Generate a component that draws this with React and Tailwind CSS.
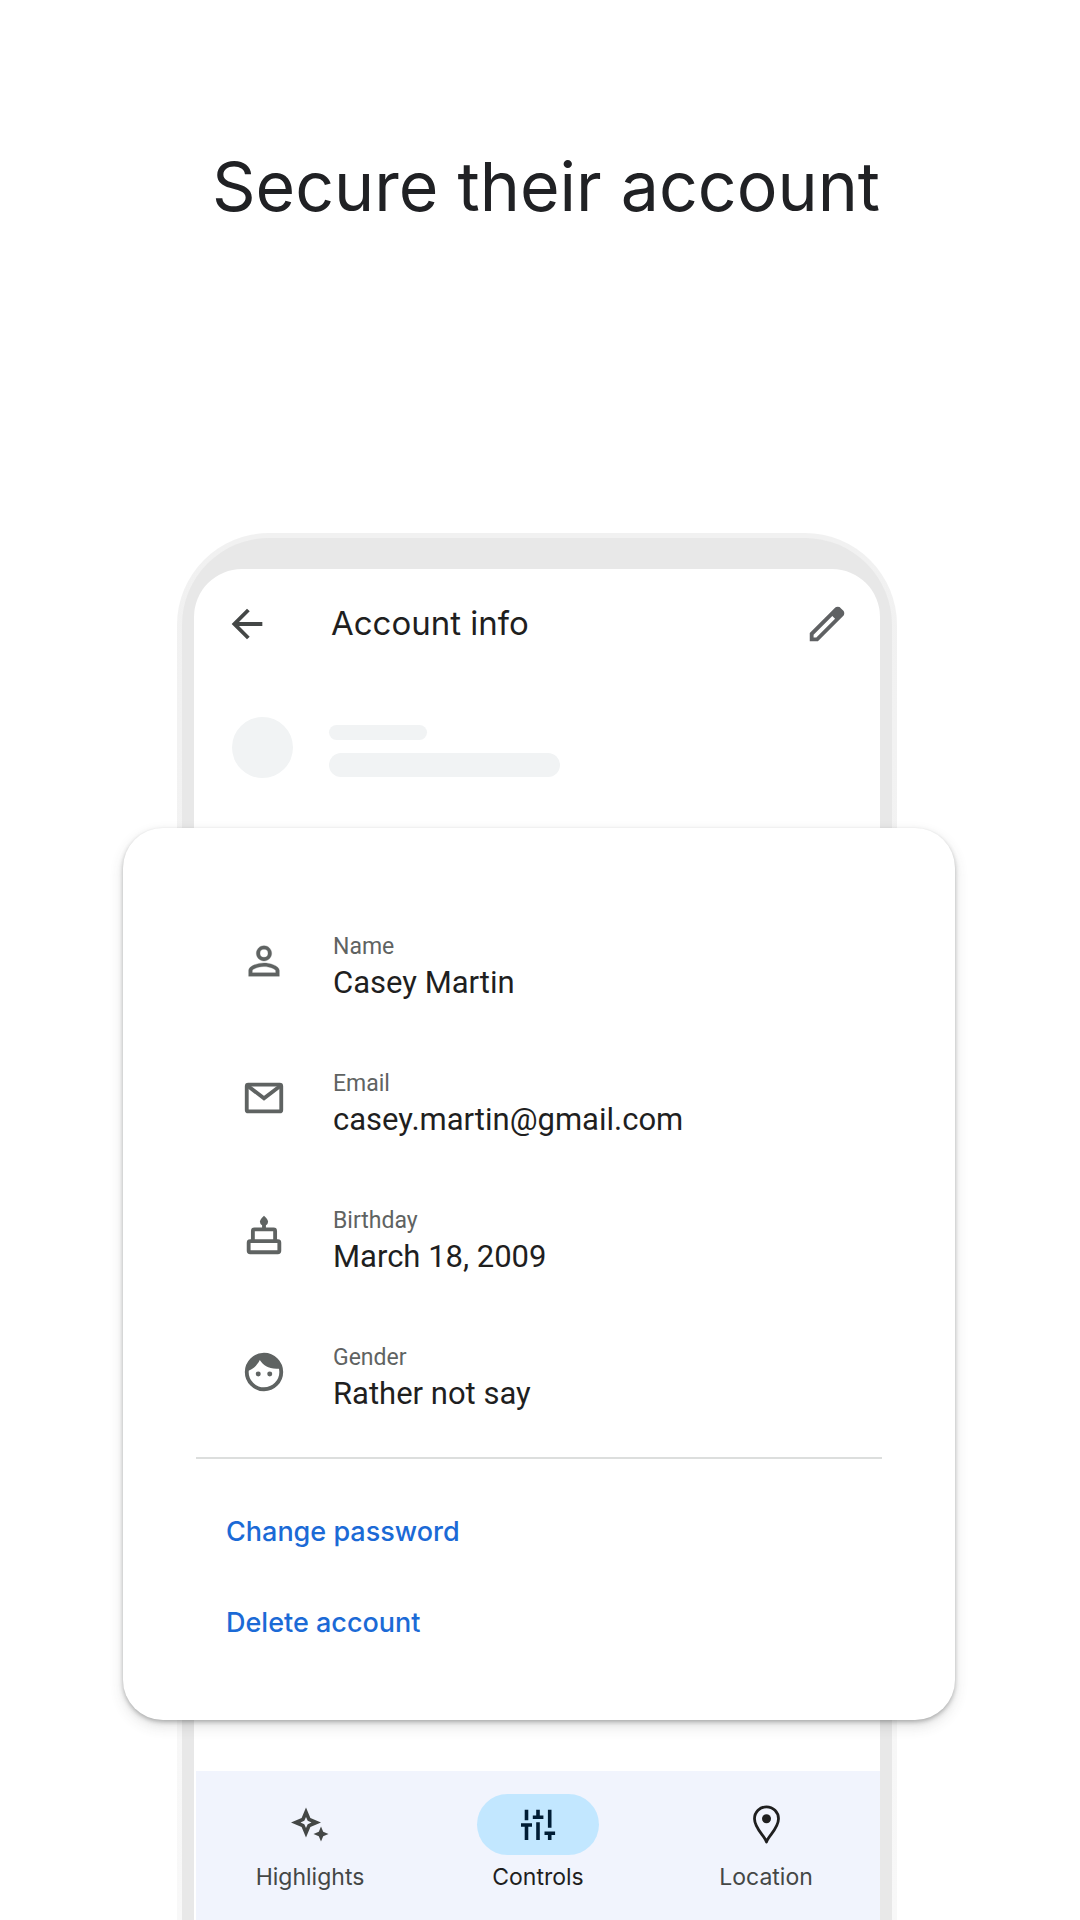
import { MdArrowBack } from 'react-icons/md';
import clsx from 'clsx';

const PersonIcon = () => (
    <svg viewBox="0 0 24 24" className="size-[46px]" fill="currentColor" stroke="currentColor" strokeWidth="0.15" aria-hidden="true">
        <path d="M12 5.9a2.1 2.1 0 1 1 0 4.2 2.1 2.1 0 0 1 0-4.2m0 9c2.97 0 6.1 1.46 6.1 2.1v1.1H5.9V17c0-.64 3.13-2.1 6.1-2.1M12 4C9.79 4 8 5.79 8 8s1.79 4 4 4 4-1.79 4-4-1.79-4-4-4zm0 9c-2.67 0-8 1.34-8 4v3h16v-3c0-2.66-5.33-4-8-4z" />
    </svg>
);

const MailIcon = () => (
    <svg viewBox="0 0 24 24" className="size-[46px]" fill="none" stroke="currentColor" strokeWidth="2" aria-hidden="true">
        <rect x="3" y="5" width="18" height="14" rx="0.8" />
        <path d="M3.4 5.6 12 12.2l8.6-6.6" />
    </svg>
);

const CakeIcon = () => (
    <svg viewBox="0 0 24 24" className="size-[46px]" fill="none" stroke="currentColor" strokeWidth="2" aria-hidden="true">
        <rect x="4" y="15.2" width="16" height="5.8" rx="0.8" />
        <path d="M6.2 15V9.9q0-.8.8-.8h10q.8 0 .8.8V15M12 5v4" />
        <path d="M12 2q2.1 2 2.1 3a2.1 2.1 0 0 1-4.2 0q0-1 2.1-3Z" fill="currentColor" stroke="none" />
    </svg>
);

const FaceIcon = () => (
    <svg viewBox="0 0 24 24" className="size-[46px]" aria-hidden="true">
        <circle cx="12" cy="12" r="9" fill="none" stroke="currentColor" strokeWidth="2" />
        <path
            d="M3.2 11.5C6.2 10.8 8.4 8.6 9.8 5.8 11.8 8.8 15 11 20.8 10.2 20 6 16.6 2.9 12 2.9S3.6 6.4 3.2 11.5Z"
            fill="currentColor"
        />
        <circle cx="9" cy="13" r="1.3" fill="currentColor" />
        <circle cx="15" cy="13" r="1.3" fill="currentColor" />
    </svg>
);

const EditIcon = () => (
    <svg viewBox="0 0 24 24" className="size-[46px]" fill="currentColor" aria-hidden="true">
        <path d="M5 19h1.425L16.2 9.225 14.775 7.8 5 17.575V19Zm-2 2v-4.25L16.2 3.575q.3-.275.663-.425.362-.15.762-.15t.775.15q.375.15.65.45L20.425 5q.3.275.438.65.137.375.137.75 0 .4-.137.763-.138.362-.438.662L7.25 21Z" />
    </svg>
);

const SparkleIcon = () => (
    <svg viewBox="0 0 46 46" className="size-[46px]" fill="currentColor" aria-hidden="true">
        <path
            fillRule="evenodd"
            d="m19 5.5 4.4 10.6L34 20.5l-10.6 4.4L19 35.5l-4.4-10.6L4 20.5l10.6-4.4L19 5.5Zm0 9.5-1.7 3.8-3.8 1.7 3.8 1.7L19 26l1.7-3.8 3.8-1.7-3.8-1.7L19 15Z"
        />
        <path d="m34 24.5 2.2 5.3 5.3 2.2-5.3 2.2-2.2 5.3-2.2-5.3-5.3-2.2 5.3-2.2 2.2-5.3Z" />
    </svg>
);

const SlidersIcon = () => (
    <svg viewBox="0 0 46 46" className="size-[46px]" fill="none" stroke="currentColor" strokeWidth="3.6" aria-hidden="true">
        <path d="M11.5 7.7v10.6M6 23h11M11.5 23v15" />
        <path d="M23 7.7v7.6M17.8 15.3h10.6M23 20.3V38" />
        <path d="M34.7 7.7v18M29.5 31.3h10.6M34.7 31.3V38" />
    </svg>
);

const PinIcon = () => (
    <svg viewBox="0 0 46 46" className="size-[46px]" aria-hidden="true">
        <path
            d="M23.5 40C22.5 34.5 11.5 27 11.5 16.8a12 12 0 0 1 24 0C35.5 27 24.5 34.5 23.5 40Z"
            fill="none"
            stroke="currentColor"
            strokeWidth="2.8"
            strokeLinejoin="round"
        />
        <circle cx="23.5" cy="16.8" r="4.5" fill="currentColor" />
    </svg>
);

const details = [
    { label: 'Name', value: 'Casey Martin', Icon: PersonIcon },
    { label: 'Email', value: 'casey.martin@gmail.com', Icon: MailIcon },
    { label: 'Birthday', value: 'March 18, 2009', Icon: CakeIcon },
    { label: 'Gender', value: 'Rather not say', Icon: FaceIcon },
];

const tabs = [
    { label: 'Highlights', Icon: SparkleIcon, iconColor: 'text-[#444746]' },
    { label: 'Controls', Icon: SlidersIcon, iconColor: 'text-[#001d35]', active: true },
    { label: 'Location', Icon: PinIcon, iconColor: 'text-[#1f1f1f]' },
];

function AccountCard() {
    return (
        <section className="relative -ml-[71px] -mr-[75px] rounded-[40px] bg-white pt-16 pb-[51px] shadow-[0_2px_4px_rgba(60,64,63,0.35),0_6px_14px_rgba(60,64,63,0.16)]">
            <dl>
                {details.map(({ label, value, Icon }) => (
                    <div key={label} className="flex h-[137px] items-center gap-[46px] pl-[118px] text-[#5f6362]">
                        <Icon />
                        <div className="pt-3">
                            <dt className="text-[23px] leading-8">{label}</dt>
                            <dd className="text-[31px] leading-10 text-[#1f1f1f]">{value}</dd>
                        </div>
                    </div>
                ))}
            </dl>
            <hr className="mx-[73px] mt-[17px] mb-7 border-t-2 border-[#dcdedd]" />
            <div className="flex flex-col items-start pl-[103px] font-['Inter','Liberation_Sans',sans-serif] text-[27px] font-medium text-[#1b6ad6]">
                <button type="button" className="h-[91px]">Change password</button>
                <button type="button" className="h-[91px]">Delete account</button>
            </div>
        </section>
    );
}

function TabBar() {
    return (
        <nav className="ml-0.5 grid flex-1 grid-cols-3 items-start bg-[#f1f4fd] pt-[23px] font-['Inter','Liberation_Sans',sans-serif]">
            {tabs.map(({ label, Icon, iconColor, active }) => (
                <a
                    key={label}
                    href={`#${label.toLowerCase()}`}
                    aria-current={active ? 'page' : undefined}
                    className="flex flex-col items-center gap-1.5"
                >
                    <span className={clsx('flex h-[61px] w-[122px] items-center justify-center rounded-full', iconColor, active && 'bg-[#c2e7ff]')}>
                        <Icon />
                    </span>
                    <span className={clsx('text-[23px] leading-8', active ? 'text-[#1f1f1f]' : 'text-[#444746]')}>{label}</span>
                </a>
            ))}
        </nav>
    );
}

export default function App() {
    return (
        <main className="flex min-h-screen flex-col bg-white pr-[183px] pl-[177px] font-['Roboto','Liberation_Sans',sans-serif] text-[#202124]">
            <h1 className="pt-[141px] pl-[18px] text-center font-['Inter','Liberation_Sans',sans-serif] text-[68px] leading-[90px] whitespace-nowrap">
                Secure their account
            </h1>

            <div className="mt-[302px] flex flex-1 flex-col rounded-t-[92px] bg-linear-to-b from-[#f1f1f1] to-[#f8f8f8] px-[5px] pt-[5px]">
                <div className="flex flex-1 flex-col rounded-t-[87px] bg-[#e8e8e8] pt-[31px] pr-3 pl-3">
                    <div className="flex flex-1 flex-col rounded-t-[48px] bg-white">
                        <header className="flex h-[109px] items-center pr-[30px] pl-[30px]">
                            <button type="button" aria-label="Back" className="text-[#444746]">
                                <MdArrowBack className="size-[46px]" />
                            </button>
                            <h2 className="ml-[61px] flex-1 font-['Inter','Liberation_Sans',sans-serif] text-[33px] text-[#1f1f1f]">Account info</h2>
                            <button type="button" aria-label="Edit" className="text-[#5f6163]">
                                <EditIcon />
                            </button>
                        </header>

                        <div className="flex gap-9 pt-[39px] pb-[50px] pl-[38px]">
                            <div className="size-[61px] rounded-full bg-[#f1f3f4]" />
                            <div className="flex flex-col gap-[13px] pt-2">
                                <div className="h-[15px] w-[98px] rounded-full bg-[#f1f3f4]" />
                                <div className="h-6 w-[231px] rounded-full bg-[#f1f3f4]" />
                            </div>
                        </div>

                        <AccountCard />
                        <div className="h-[51px]" />
                        <TabBar />
                    </div>
                </div>
            </div>
        </main>
    );
}
